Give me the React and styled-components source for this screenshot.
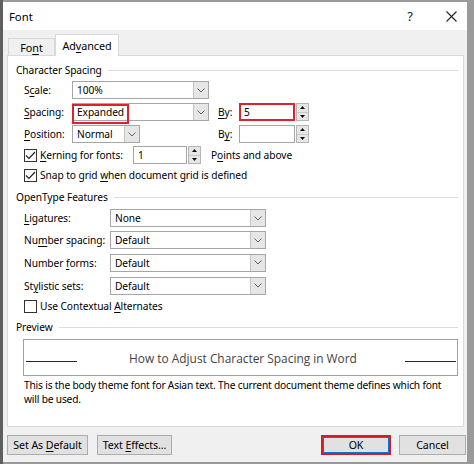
import React from "react";
import styled, { createGlobalStyle } from "styled-components";

const GlobalStyle = createGlobalStyle`
  html, body { margin: 0; padding: 0; background: #8c8c8c; }
  body { font-family: "Noto Sans", "Segoe UI", sans-serif; font-size: 10.2px; letter-spacing: -0.07px; color: #000; }
  * { box-sizing: border-box; }
`;

const Screen = styled.div`
  width: 474px;
  height: 464px;
  padding: 2px 7px 0 3px;
  background: linear-gradient(to right, #5f5f5f 0 3px, #9a9a9a 3px);
  overflow: hidden;
`;

const Window = styled.div`
  width: 464px;
  height: 460px;
  background: #f0f0f0;
  display: flex;
  flex-direction: column;
`;

const TitleBar = styled.div`
  height: 28px;
  background: #fff;
  display: flex;
  align-items: center;
  padding-left: 6px;
  font-size: 11.3px;
  letter-spacing: 0;
`;

const TitleText = styled.div`
  flex: 1;
`;

const TitleButton = styled.div`
  width: ${(p) => p.$w}px;
  height: 28px;
  display: flex;
  align-items: center;
  justify-content: center;
  font-size: 13px;
  color: #222;
`;

const TabStrip = styled.div`
  height: 25px;
  display: flex;
  align-items: flex-end;
  padding-left: 5px;
  font-size: 10.8px;
`;

const Tab = styled.div`
  position: relative;
  z-index: ${(p) => (p.$active ? 1 : 0)};
  width: ${(p) => p.$w}px;
  height: ${(p) => (p.$active ? 22 : 17)}px;
  margin-bottom: ${(p) => (p.$active ? -1 : 0)}px;
  background: ${(p) => (p.$active ? "#fff" : "#f0f0f0")};
  border: 1px solid #d9d9d9;
  border-bottom: none;
  display: flex;
  align-items: center;
  justify-content: center;
  padding-top: ${(p) => (p.$active ? 0 : 1)}px;
`;

const Panel = styled.div`
  margin: 0 3px 0 4px;
  height: 372px;
  background: #fff;
  border: 1px solid #d9d9d9;
  padding: 7px 5px 0 8px;
  display: flex;
  flex-direction: column;
`;

const SectionHeader = styled.div`
  height: 14px;
  display: flex;
  align-items: center;
  gap: 6px;
  margin-top: ${(p) => p.$mt || 0}px;
  white-space: nowrap;
  &::after {
    content: "";
    flex: 1;
    height: 1px;
    background: #dcdcdc;
  }
`;

const Row = styled.div`
  height: ${(p) => p.$h || 22}px;
  display: flex;
  align-items: center;
  padding-left: 8px;
  white-space: nowrap;
`;

const Label = styled.div`
  width: ${(p) => p.$w}px;
  flex: none;
`;

const Cell = styled.div`
  width: ${(p) => p.$w}px;
  flex: none;
  display: flex;
`;

const ComboBox = styled.div`
  position: relative;
  width: ${(p) => p.$w}px;
  height: 18px;
  border: 1px solid #a6a6a6;
  background: #fff;
  display: flex;
`;

const ComboText = styled.div`
  flex: 1;
  padding-left: 4px;
  line-height: 16px;
`;

const DropButton = styled.div`
  width: 15px;
  border-left: 1px solid #c4c4c4;
  background: #e6e6e6;
  display: flex;
  align-items: center;
  justify-content: center;
`;

const Highlight = styled.div`
  position: absolute;
  left: -1px;
  top: 0px;
  width: 57px;
  height: 20px;
  border: 2px solid #d9232e;
  pointer-events: none;
`;

const SpinField = styled.div`
  display: flex;
  height: 18px;
`;

const SpinInput = styled.div`
  width: ${(p) => p.$w}px;
  height: 18px;
  border: ${(p) => (p.$red ? "2px solid #d9232e" : "1px solid #a6a6a6")};
  background: #fff;
  padding-left: ${(p) => (p.$red ? 3 : 4)}px;
  line-height: ${(p) => (p.$red ? 14 : 16)}px;
`;

const Spinner = styled.div`
  width: 13px;
  height: 18px;
  margin-left: 1px;
  border: 1px solid #b5b5b5;
  background: #e6e6e6;
  display: flex;
  flex-direction: column;
`;

const SpinHalf = styled.div`
  flex: 1;
  display: flex;
  align-items: center;
  justify-content: center;
  & + & { border-top: 1px solid #c8c8c8; }
`;

const CheckBox = styled.div`
  width: 13px;
  height: 13px;
  border: 1px solid #333;
  background: #fff;
  flex: none;
  display: flex;
  align-items: center;
  justify-content: center;
  margin-right: 3px;
`;

const CheckLabel = styled.div`
  width: ${(p) => (p.$w ? `${p.$w}px` : "auto")};
  flex: none;
  display: flex;
  align-items: center;
`;

const AfterText = styled.div`
  margin-left: 10px;
`;

const PreviewBox = styled.div`
  margin: 5px 0 0 7px;
  width: 435px;
  height: 37px;
  border: 1px solid #a0a0a0;
  display: flex;
  align-items: center;
  justify-content: space-between;
  padding: 0 1px 0 2px;
`;

const PreviewLine = styled.div`
  width: 51px;
  height: 1px;
  background: #222;
  margin-top: 8px;
`;

const PreviewText = styled.div`
  font-family: "Open Sans", "Noto Sans", sans-serif;
  font-weight: 400;
  font-size: 11.9px;
  letter-spacing: 0;
  color: #444;
  margin-left: 4px;
`;

const Description = styled.div`
  padding-left: 8px;
  margin-top: 2px;
  line-height: 14px;
  letter-spacing: -0.18px;
  white-space: nowrap;
`;

const ButtonRow = styled.div`
  margin-top: 8px;
  padding: 0 1px 0 4px;
  display: flex;
  align-items: center;
`;

const Button = styled.div`
  width: ${(p) => p.$w}px;
  height: 20px;
  margin-left: ${(p) => p.$ml || 0}px;
  background: #e1e1e1;
  border: ${(p) => (p.$primary ? "2px solid #d01f2b" : "1px solid #adadad")};
  box-shadow: ${(p) => (p.$primary ? "inset 0 0 0 1px #0078d7" : "none")};
  display: flex;
  align-items: center;
  justify-content: center;
  white-space: nowrap;
  font-size: 10.6px;
`;

const Spacer = styled.div`
  flex: 1;
`;

const Chevron = () => (
  <svg width="8" height="5" viewBox="0 0 8 5">
    <polyline points="0.5,0.5 4,4 7.5,0.5" fill="none" stroke="#606060" strokeWidth="1" />
  </svg>
);

const Tri = ({ up }) => (
  <svg width="5" height="3" viewBox="0 0 5 3">
    <polygon points={up ? "0,3 5,3 2.5,0" : "0,0 5,0 2.5,3"} fill="#111" />
  </svg>
);

const Check = () => (
  <svg width="11" height="9" viewBox="0 0 11 9">
    <polyline points="1,4.5 4,7.5 10,1" fill="none" stroke="#222" strokeWidth="1.2" />
  </svg>
);

const Combo = ({ w, value, highlight }) => (
  <ComboBox $w={w}>
    <ComboText>{value}</ComboText>
    <DropButton>
      <Chevron />
    </DropButton>
    {highlight && <Highlight />}
  </ComboBox>
);

const Spin = ({ w, value, red }) => (
  <SpinField>
    <SpinInput $w={w} $red={red}>{value}</SpinInput>
    <Spinner>
      <SpinHalf><Tri up /></SpinHalf>
      <SpinHalf><Tri /></SpinHalf>
    </Spinner>
  </SpinField>
);

const U = styled.span`
  text-decoration: underline;
  text-underline-offset: 2px;
`;

export default function App() {
  return (
    <>
      <GlobalStyle />
      <Screen>
        <Window>
          <TitleBar>
            <TitleText>Font</TitleText>
            <TitleButton $w={50}>?</TitleButton>
            <TitleButton $w={32}>
              <svg width="11" height="11" viewBox="0 0 11 11">
                <path d="M0.5 0.5 L10.5 10.5 M10.5 0.5 L0.5 10.5" stroke="#222" strokeWidth="1.1" />
              </svg>
            </TitleButton>
          </TitleBar>
          <TabStrip>
            <Tab $w={47}><span>Fo<U>n</U>t</span></Tab>
            <Tab $w={64} $active><span>Ad<U>v</U>anced</span></Tab>
          </TabStrip>
          <Panel>
            <SectionHeader>Character Spacing</SectionHeader>
            <Row style={{ marginTop: 2 }}>
              <Label $w={48}>S<U>c</U>ale:</Label>
              <Combo w={137} value="100%" />
            </Row>
            <Row>
              <Label $w={48}><U>S</U>pacing:</Label>
              <Cell $w={146}><Combo w={137} value="Expanded" highlight /></Cell>
              <Label $w={21}><U>B</U>y:</Label>
              <Spin w={56} value="5" red />
            </Row>
            <Row>
              <Label $w={48}><U>P</U>osition:</Label>
              <Cell $w={146}><Combo w={68} value="Normal" /></Cell>
              <Label $w={21}>B<U>y</U>:</Label>
              <Spin w={56} value="" />
            </Row>
            <Row $h={20}>
              <CheckLabel $w={109}>
                <CheckBox><Check /></CheckBox>
                <span><U>K</U>erning for fonts:</span>
              </CheckLabel>
              <Spin w={54} value="1" />
              <AfterText>P<U>o</U>ints and above</AfterText>
            </Row>
            <Row $h={20}>
              <CheckLabel>
                <CheckBox><Check /></CheckBox>
                <span>Snap to grid <U>w</U>hen document grid is defined</span>
              </CheckLabel>
            </Row>
            <SectionHeader $mt={5}>OpenType Features</SectionHeader>
            <Row style={{ marginTop: 3 }}>
              <Label $w={86}><U>L</U>igatures:</Label>
              <Combo w={156} value="None" />
            </Row>
            <Row>
              <Label $w={86}>Nu<U>m</U>ber spacing:</Label>
              <Combo w={156} value="Default" />
            </Row>
            <Row $h={23}>
              <Label $w={86}>Number <U>f</U>orms:</Label>
              <Combo w={156} value="Default" />
            </Row>
            <Row $h={23}>
              <Label $w={86}>St<U>y</U>listic sets:</Label>
              <Combo w={156} value="Default" />
            </Row>
            <Row $h={18}>
              <CheckLabel>
                <CheckBox />
                <span>Use Contextual <U>A</U>lternates</span>
              </CheckLabel>
            </Row>
            <SectionHeader $mt={5}>Preview</SectionHeader>
            <PreviewBox>
              <PreviewLine />
              <PreviewText>How to Adjust Character Spacing in Word</PreviewText>
              <PreviewLine />
            </PreviewBox>
            <Description>
              This is the body theme font for Asian text. The current document theme defines which font
              <br />
              will be used.
            </Description>
          </Panel>
          <ButtonRow>
            <Button $w={81}><span>Set As <U>D</U>efault</span></Button>
            <Button $w={75} $ml={9}><span>Text <U>E</U>ffects...</span></Button>
            <Spacer />
            <Button $w={70} $primary>OK</Button>
            <Button $w={67} $ml={8}>Cancel</Button>
          </ButtonRow>
        </Window>
      </Screen>
    </>
  );
}
